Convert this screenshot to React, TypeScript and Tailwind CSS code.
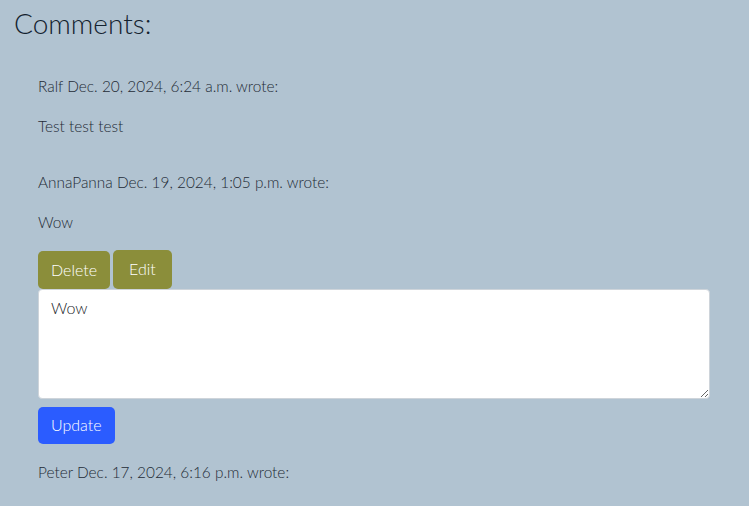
import React from "react";

type Comment = {
  author: string;
  date: string;
  body: string;
  editing?: boolean;
};

const comments: Comment[] = [
  { author: "Ralf", date: "Dec. 20, 2024, 6:24 a.m.", body: "Test test test" },
  {
    author: "AnnaPanna",
    date: "Dec. 19, 2024, 1:05 p.m.",
    body: "Wow",
    editing: true,
  },
  { author: "Peter", date: "Dec. 17, 2024, 6:16 p.m.", body: "" },
];

const CommentItem: React.FC<{ comment: Comment }> = ({ comment }) => {
  return (
    <div className="pb-4">
      <p className="mb-4 leading-6">
        {comment.author} {comment.date} wrote:
      </p>
      {comment.body && <p className="mb-4 leading-6">{comment.body}</p>}
      {comment.editing && (
        <div className="-mb-4">
          <div className="flex gap-[3px] items-end">
            <button className="h-[38px] px-[13px] rounded-[5px] bg-[#8b8e3a] text-white font-light text-base">
              Delete
            </button>
            <button className="h-[39px] px-4 rounded-[5px] bg-[#8b8e3a] text-white font-light text-base">
              Edit
            </button>
          </div>
          <textarea
            className="block w-[672px] h-[110px] px-3 py-[6px] bg-white border border-[#ced4da] rounded-[4px] text-[#212529] leading-6 font-light text-base"
            defaultValue={comment.body}
          />
          <button className="mt-2 h-[37px] px-[13px] rounded-[5px] bg-[#2b5cff] text-white font-light text-base">
            Update
          </button>
          <div className="h-4" />
        </div>
      )}
    </div>
  );
};

export default function App() {
  return (
    <div
      className="w-[749px] h-[506px] overflow-hidden bg-[#b1c3d1] text-[#1f2b36] font-light text-[15.4px]"
      style={{ fontFamily: "Lato, 'Liberation Sans', sans-serif" }}
    >
      <div className="px-[14px] pt-[7px]">
        <h3 className="text-[28px] leading-[1.2] font-light text-[#13222f]">
          Comments:
        </h3>
        <div className="pl-6 pt-[33px]">
          {comments.map((c) => (
            <CommentItem key={c.author + c.date} comment={c} />
          ))}
        </div>
      </div>
    </div>
  );
}
